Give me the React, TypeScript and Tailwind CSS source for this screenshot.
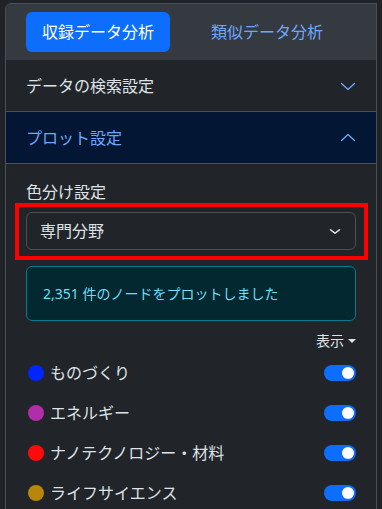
const categories = [
  { label: "ものづくり", color: "#0026ff" },
  { label: "エネルギー", color: "#b02ea8" },
  { label: "ナノテクノロジー・材料", color: "#ff0a0a" },
  { label: "ライフサイエンス", color: "#b8860b" },
];

const Chevron = ({ up }: { up?: boolean }) => (
  <svg
    width="16"
    height="16"
    viewBox="0 0 16 16"
    fill="none"
    stroke="#6ea8fe"
    strokeWidth="1.3"
    strokeLinecap="round"
    strokeLinejoin="round"
    className={up ? "rotate-180" : ""}
  >
    <path d="M1.5 5.5 8 11.5l6.5-6" />
  </svg>
);

const Toggle = () => (
  <span className="flex h-4 w-8 items-center justify-end rounded-full bg-[#0d6efd] px-[2px]">
    <span className="h-3 w-3 rounded-full bg-white" />
  </span>
);

export default function App() {
  return (
    <div
      className="min-h-screen bg-[#1f2226] px-[5px] pt-[3px] text-[#dee2e6]"
      style={{ fontFamily: '"Noto Sans", "Noto Sans CJK JP", sans-serif' }}
    >
      <div className="min-h-[506px] overflow-hidden rounded-tl-md border border-[#495057] bg-[#212529]">
        {/* tabs */}
        <div className="flex gap-[25px] bg-[#343a40] px-5 py-2">
          <button className="h-10 rounded-md bg-[#0d6efd] px-4 text-base leading-6 text-white">
            収録データ分析
          </button>
          <button className="h-10 rounded-md px-4 text-base leading-6 text-[#6ea8fe]">
            類似データ分析
          </button>
        </div>

        {/* accordion */}
        <div className="flex h-[52px] items-center justify-between border-b border-[#495057] px-5 text-base">
          <span>データの検索設定</span>
          <Chevron />
        </div>
        <div className="flex h-[52px] items-center justify-between border-b border-[#495057] bg-[#031633] px-5 text-base text-[#6ea8fe]">
          <span>プロット設定</span>
          <Chevron up />
        </div>

        <div className="px-5 pt-4 pb-4">
          <div className="mb-2 text-base leading-6">色分け設定</div>
          <div className="relative">
            <div className="flex h-[38px] items-center justify-between rounded-md border border-[#495057] bg-[#212529] pr-[14px] pl-[13px] text-base">
              <span>専門分野</span>
              <svg width="12" height="9" viewBox="0 0 16 16" fill="none" stroke="#dee2e6" strokeWidth="2.2" strokeLinecap="round" strokeLinejoin="round" preserveAspectRatio="none">
                <path d="m2 5 6 6 6-6" />
              </svg>
            </div>
            <span className="pointer-events-none absolute -top-[9px] -right-[12px] -bottom-[10px] -left-[11px] border-4 border-[#ff0000]" />
          </div>

          <div className="mt-4 mb-[9px] rounded-md border border-[#087990] bg-[#032830] px-4 py-4 text-sm leading-[21px] text-[#6edff6]">
            2,351 件のノードをプロットしました
          </div>

          <div className="flex items-center justify-end gap-1 text-sm leading-[21px]">
            <span>表示</span>
            <span className="h-0 w-0 border-x-[4px] border-t-[4px] border-x-transparent border-t-[#dee2e6]" />
          </div>

          <div className="mt-[2px]">
            {categories.map((c) => (
              <div key={c.label} className="flex h-10 items-center justify-between">
                <div className="flex items-center gap-[6px] pl-[2px] text-base">
                  <span className="h-4 w-4 rounded-full" style={{ backgroundColor: c.color }} />
                  <span>{c.label}</span>
                </div>
                <Toggle />
              </div>
            ))}
          </div>
        </div>
      </div>
    </div>
  );
}
